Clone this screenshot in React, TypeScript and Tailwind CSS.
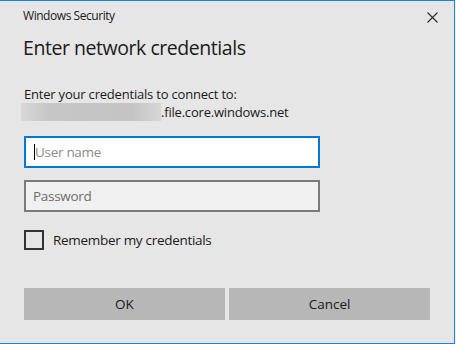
import React from "react";

const font = { fontFamily: '"Open Sans", "Noto Sans", "Liberation Sans", sans-serif' };

export default function App() {
  return (
    <div className="flex w-[456px] h-[344px] bg-[#f0f0f0]" style={font}>
      <div className="relative flex flex-col w-[455px] h-[344px] bg-[#e6e6e6] border-t border-r border-b border-[#1883d7] text-[#000]">
        {/* title bar */}
        <div className="flex items-start justify-between pl-[23px] pr-[16px] pt-[7px] h-[30px]">
          <span className="text-[12px] leading-[16px] tracking-[-0.45px] text-[#1a1a1a]">Windows Security</span>
          <svg width="11" height="11" viewBox="0 0 11 11" className="mt-[4px]">
            <path d="M0.5 0.5 L10.5 10.5 M10.5 0.5 L0.5 10.5" stroke="#2b2b2b" strokeWidth="1.1" />
          </svg>
        </div>
        <div className="pl-[23px] mt-[4px] text-[19.5px] leading-[26px] tracking-[-0.45px] text-[#1a1a1a]">
          Enter network credentials
        </div>
        <div className="pl-[24px] mt-[25px] text-[13px] leading-[17px] tracking-[-0.2px] text-[#1a1a1a]">
          Enter your credentials to connect to:
        </div>
        <div className="flex items-center pl-[21px] h-[18px] text-[13px] leading-[17px] tracking-[-0.2px] text-[#1a1a1a]">
          <div className="w-[140px] h-[18px] bg-[linear-gradient(90deg,#d8d8d8,#c6c6c6_20%,#c4c4c4_80%,#d6d6d6)] blur-[0.5px]" />
          <span>.file.core.windows.net</span>
        </div>
        <div className="pl-[24px] mt-[15px]">
          <div className="relative flex items-center w-[296px] h-[32px] bg-white border-2 border-[#0078d7] pl-[8px]">
            <div className="w-[1px] h-[16px] bg-black" />
            <span className="text-[13.5px] text-[#8a8a8a] tracking-[-0.3px]">User name</span>
          </div>
          <div className="flex items-center w-[296px] h-[32px] mt-[12px] bg-[#f0f0f0] border-2 border-[#7a7a7a] pl-[7px]">
            <span className="text-[13.5px] text-[#6d6d6d] tracking-[-0.3px]">Password</span>
          </div>
          <div className="flex items-center mt-[18px] h-[20px]">
            <div className="w-[20px] h-[20px] border-2 border-[#333]" />
            <span className="ml-[9px] text-[13.5px] text-[#1a1a1a] tracking-[-0.3px]">Remember my credentials</span>
          </div>
        </div>
        <div className="flex pl-[24px] gap-[4px] mt-[38px]">
          <div className="flex items-center justify-center w-[201px] h-[32px] bg-[#b7b7b7] text-[13.5px] text-[#1a1a1a]">OK</div>
          <div className="flex items-center justify-center w-[201px] h-[32px] bg-[#b7b7b7] text-[13.5px] text-[#1a1a1a]">Cancel</div>
        </div>
      </div>
      <div className="w-[1px] h-[344px] bg-[#f4f4f4]" />
    </div>
  );
}
